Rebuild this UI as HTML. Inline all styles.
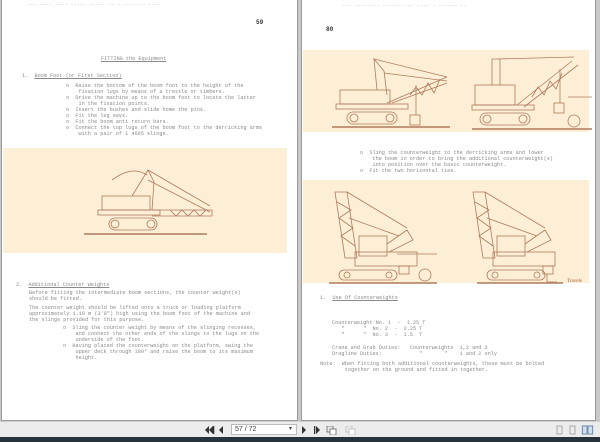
<!DOCTYPE html>
<html><head><meta charset="utf-8"><style>
*{margin:0;padding:0;box-sizing:border-box}
body{width:600px;height:442px;background:#c9c9c9;position:relative;overflow:hidden;font-family:"Liberation Mono",monospace}
.page{position:absolute;top:0;height:421px;background:#fff;border:1px solid #9a9a9a;border-top:none}
.t{position:absolute;font-size:5.2px;line-height:6px;color:#8a8a8a;white-space:pre}
.band{position:absolute;background:#fcefd6}
.tb{position:absolute;left:0;top:421px;width:600px;height:16px;background:#ececec;border-top:1px solid #cfcfcf}
.dk{position:absolute;left:0;top:437px;width:600px;height:5px;background:#27333a}
svg{position:absolute}
</style></head><body>
<div class="page" style="left:1px;width:297px">
 <div class="t" style="left:25px;top:2px;color:#bbb">--- ---- ---- ----- ----- -- - ------- ----</div>
 <div class="t" style="left:254px;top:20px;color:#333;font-weight:bold;font-size:6px">59</div>
 <div class="t" style="left:99px;top:56px;text-decoration:underline">FITTING the Equipment</div>
 <div class="t" style="left:20px;top:73px">1.  <u>Boom Foot (or First Section)</u></div>
 <div class="t" style="left:64px;top:83px">o  Raise the bottom of the boom foot to the height of the
    fixation lugs by means of a trestle or timbers.
o  Drive the machine up to the boom foot to locate the latter
    in the fixation points.
o  Insert the bushes and slide home the pins.
o  Fit the leg says.
o  Fit the boom anti return bars.
o  Connect the top lugs of the boom foot to the derricking arms
    with a pair of 1 4665 slings.</div>
 <div class="band" style="left:1px;top:148px;width:284px;height:105px"></div>
 <svg style="left:80px;top:160px" width="140" height="90" viewBox="0 0 140 90" fill="none" stroke="#b07a5c" stroke-width="0.8">
  <path d="M30 20 Q50 5 65 15"/>
  <rect x="20" y="36" width="48" height="14"/><rect x="16" y="50" width="62" height="5"/>
  <rect x="27" y="58" width="48" height="12" rx="6"/><circle cx="33" cy="64" r="4"/><circle cx="69" cy="64" r="4"/>
  <path d="M50 36 L66 10 L72 22 L70 50"/><path d="M66 10 L128 46"/><path d="M66 20 L128 52"/>
  <path d="M70 50 L130 50 L130 56 L70 56"/><path d="M88 50 L94 56 L100 50 L106 56 L112 50 L118 56 L124 50"/>
  <path d="M2 74 H125" stroke-width="1.4"/>
 </svg>
 <div class="t" style="left:14px;top:282px">2.  <u>Additional Counter Weights</u></div>
 <div class="t" style="left:27px;top:290px">Before fitting the intermediate boom sections, the counter weight(s)
should be fitted.</div>
 <div class="t" style="left:27px;top:305px">The counter weight should be lifted onto a truck or loading platform
approximately 1.10 m (3'8") high using the boom foot of the machine and
the slings provided for this purpose.</div>
 <div class="t" style="left:61px;top:325px">o  Sling the counter weight by means of the slinging recesses,
    and connect the other ends of the slings to the lugs on the
    underside of the foot.
o  Having placed the counterweight on the platform, swing the
    upper deck through 180° and raise the boom to its maximum
    height.</div>
</div>
<div class="page" style="left:301px;width:295px">
 <div class="t" style="left:40px;top:3px;color:#bbb">--- -------- ------- -- ---- - ------ --</div>
 <div class="t" style="left:24px;top:27px;color:#333;font-weight:bold;font-size:6px">80</div>
 <div class="band" style="left:1px;top:50px;width:286px;height:82px"></div>
 <svg style="left:30px;top:55px" width="260" height="78" viewBox="0 0 260 78" fill="none" stroke="#b07a5c" stroke-width="0.8">
  <rect x="8" y="35" width="50" height="14"/><rect x="4" y="49" width="72" height="5"/>
  <rect x="15" y="57" width="50" height="12" rx="6"/><circle cx="22" cy="63" r="4"/><circle cx="58" cy="63" r="4"/>
  <path d="M45 35 L42 4 L52 16 L55 40"/><path d="M42 4 L115 22"/><path d="M52 18 L115 26"/>
  <path d="M55 48 L115 22 M60 48 L115 28"/><path d="M78 40 L84 32 L90 40 L96 28 L102 38 L108 24"/>
  <path d="M84 30 V60"/><rect x="78" y="60" width="10" height="10"/><path d="M0 72 H118" stroke-width="1.4"/>
  <rect x="143" y="30" width="40" height="20"/><rect x="140" y="50" width="62" height="5"/>
  <rect x="148" y="58" width="50" height="12" rx="6"/><circle cx="155" cy="64" r="4"/><circle cx="191" cy="64" r="4"/>
  <path d="M160 30 V4 L168 4 V30"/><path d="M166 4 L242 2"/><path d="M185 50 L240 6 M192 52 L246 10"/>
  <path d="M200 42 L206 32 L212 40 L218 26 L224 34 L230 18"/><path d="M228 14 V48"/><rect x="222" y="48" width="10" height="10"/>
  <circle cx="242" cy="66" r="6"/><path d="M236 42 H262"/><path d="M140 74 H260" stroke-width="1.4"/>
 </svg>
 <div class="t" style="left:58px;top:150px">o  Sling the counterweight to the derricking arms and lower
    the boom in order to bring the additional counterweight(s)
    into position over the basic counterweight.
o  Fit the two horizontal ties.</div>
 <div class="band" style="left:1px;top:180px;width:286px;height:103px"></div>
 <svg style="left:25px;top:188px" width="260" height="96" viewBox="0 0 260 96" fill="none" stroke="#b07a5c" stroke-width="0.8">
  <path d="M8 4 L20 4 L30 70 L18 70 Z"/><path d="M10 14 L24 22 L12 30 L26 40 L14 48 L28 58"/><path d="M20 4 L80 40"/><path d="M22 30 L72 48"/>
  <rect x="32" y="48" width="28" height="20"/><rect x="28" y="64" width="62" height="14"/><path d="M60 56 L80 42 L86 52 L62 64"/>
  <rect x="72" y="78" width="10" height="8"/><path d="M70 66 H110"/>
  <rect x="12" y="82" width="58" height="10" rx="5"/><circle cx="20" cy="87" r="3"/><circle cx="62" cy="87" r="3"/>
  <circle cx="98" cy="87" r="6"/><path d="M2 95 H110" stroke-width="1.4"/>
  <path d="M146 4 L158 4 L168 70 L156 70 Z"/><path d="M148 14 L162 22 L150 30 L164 40 L152 48 L166 58"/><path d="M158 4 L218 40"/><path d="M160 30 L210 48"/>
  <rect x="170" y="48" width="28" height="20"/><rect x="166" y="64" width="62" height="14"/><path d="M198 56 L218 42 L224 52 L200 64"/>
  <rect x="216" y="78" width="10" height="8"/><path d="M220 86 V94 H230"/>
  <rect x="160" y="82" width="58" height="10" rx="5"/><circle cx="168" cy="87" r="3"/><circle cx="210" cy="87" r="3"/>
  <path d="M150 95 H236" stroke-width="1.4"/>
 </svg>
 <div class="t" style="left:265px;top:279px;color:#a0603c;font-family:'Liberation Serif',serif;font-size:5px">Travels</div>
 <div class="t" style="left:18px;top:295px">1.  <u>Use Of Counterweights</u></div>
 <div class="t" style="left:30px;top:320px">Counterweight No. 1  -  1.25 T
   "      "  No. 2  -  2.25 T
   "      "  No. 3  -  1.5  T</div>
 <div class="t" style="left:30px;top:345px">Crane and Grab Duties:   Counterweights  1,2 and 3
Dragline Duties:            "       "    1 and 2 only</div>
 <div class="t" style="left:18px;top:361px">Note:  When fitting both additional counterweights, these must be bolted
        together on the ground and fitted in together.</div>
</div>
<div class="tb">
 <svg style="left:205px;top:4px" width="28" height="8" viewBox="0 0 28 8"><path d="M0 4 L4 0 V8Z M4 4 L8 0 V8Z" fill="#333"/><rect x="8" y="0" width="1.3" height="8" fill="#333"/><path d="M14 4 L18 0 V8Z" fill="#333"/></svg>
 <div style="position:absolute;left:231px;top:2px;width:66px;height:11px;background:#fff;border:1px solid #bbb;font-family:'Liberation Sans',sans-serif;font-size:7px;line-height:9px;color:#444;padding-left:3px">57 / 72<span style="position:absolute;right:4px;font-size:6px">▾</span></div>
 <svg style="left:302px;top:4px" width="60" height="9" viewBox="0 0 60 9"><path d="M0 0 L4 4 L0 8Z" fill="#333"/><rect x="12" y="0" width="1.3" height="8" fill="#333"/><path d="M14 0 L18 4 L14 8Z" fill="#333"/><rect x="25" y="0" width="6" height="6" fill="none" stroke="#666" stroke-width="0.8"/><rect x="28" y="3" width="6" height="6" fill="#fff" stroke="#666" stroke-width="0.8"/><rect x="44" y="0" width="6" height="6" fill="none" stroke="#bbb" stroke-width="0.8"/><rect x="47" y="3" width="6" height="6" fill="#fff" stroke="#bbb" stroke-width="0.8"/></svg>
 <svg style="left:556px;top:3px" width="40" height="10" viewBox="0 0 40 10"><rect x="1" y="1" width="5" height="8" fill="none" stroke="#999" stroke-width="0.8"/><rect x="14" y="1" width="5" height="8" fill="none" stroke="#999" stroke-width="0.8"/><rect x="25" y="0" width="13" height="10" fill="#cfe0f3"/><rect x="26.5" y="1" width="4.5" height="8" fill="none" stroke="#6a7f99" stroke-width="0.8"/><rect x="32" y="1" width="4.5" height="8" fill="none" stroke="#6a7f99" stroke-width="0.8"/></svg>
</div>
<div class="dk"></div>
</body></html>
